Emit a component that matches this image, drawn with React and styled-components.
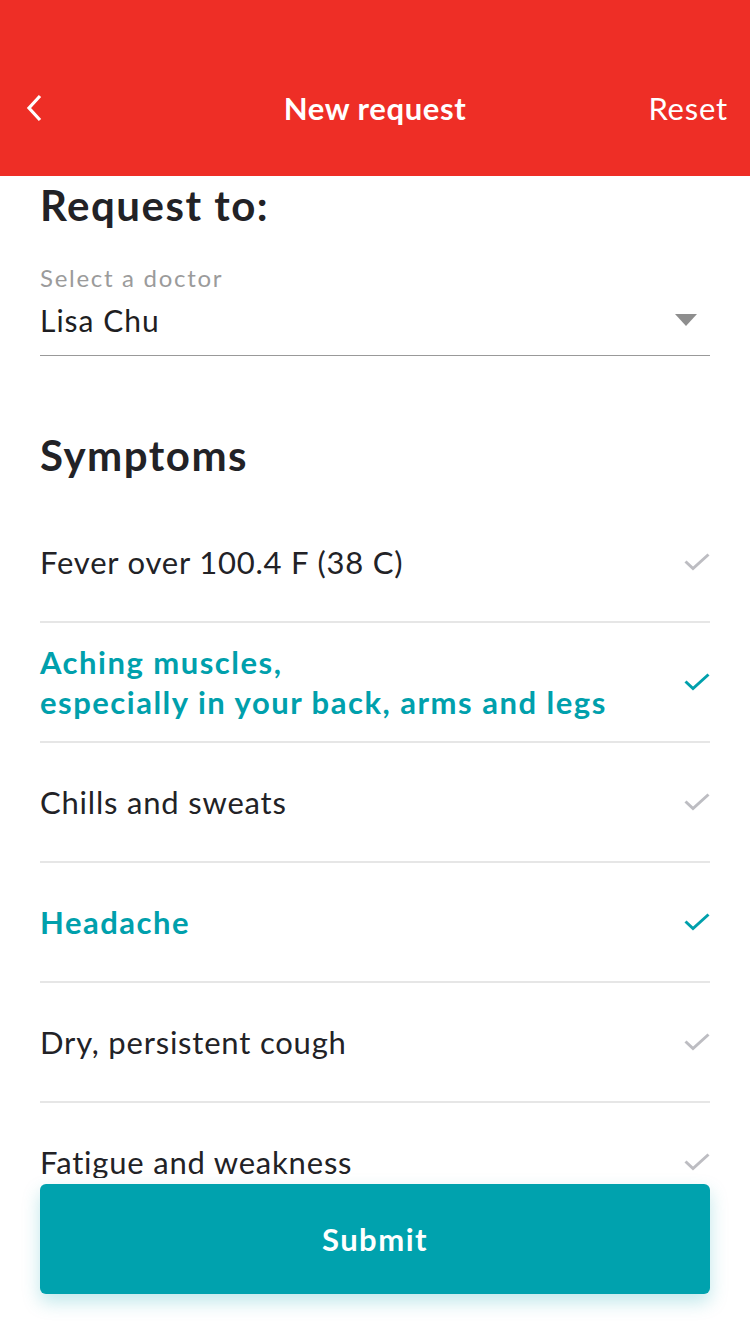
import styled, { createGlobalStyle } from 'styled-components';

const symptoms = [
  { label: 'Fever over 100.4 F (38 C)', checked: false },
  { label: 'Aching muscles,\nespecially in your back, arms and legs', checked: true },
  { label: 'Chills and sweats', checked: false },
  { label: 'Headache', checked: true },
  { label: 'Dry, persistent cough', checked: false },
  { label: 'Fatigue and weakness', checked: false },
];

const Check = ({ checked }) => (
  <CheckIcon viewBox="0 0 26 18" $checked={checked}>
    <path d="M1.5 8.5 L9 15.5 L24.5 1.5" />
  </CheckIcon>
);

const App = () => (
  <>
    <GlobalStyle />
    <Page>
      <Header>
        <BackButton aria-label="Back">
          <svg width="18" height="28" viewBox="0 0 18 28">
            <path d="M15 2 L4 14 L15 26" fill="none" stroke="#fff" strokeWidth="3.2" />
          </svg>
        </BackButton>
        <Title>New request</Title>
        <ResetButton>Reset</ResetButton>
      </Header>
      <Content>
        <SectionTitle>Request to:</SectionTitle>
        <Select>
          <SelectLabel>Select a doctor</SelectLabel>
          <SelectRow>
            <SelectValue>Lisa Chu</SelectValue>
            <Caret />
          </SelectRow>
        </Select>
        <SectionTitle $top={74}>Symptoms</SectionTitle>
        <List>
          {symptoms.map((s) => (
            <Row key={s.label}>
              <RowText $checked={s.checked}>{s.label}</RowText>
              <Check checked={s.checked} />
            </Row>
          ))}
        </List>
      </Content>
      <Footer>
        <SubmitButton>Submit</SubmitButton>
      </Footer>
    </Page>
  </>
);

const GlobalStyle = createGlobalStyle`
  body {
    margin: 0;
    font-family: Lato, "Noto Sans", sans-serif;
    background: #fff;
  }
`;

const Page = styled.div`
  width: 750px;
  height: 1334px;
  display: flex;
  flex-direction: column;
  overflow: hidden;
`;

const Header = styled.header`
  height: 176px;
  flex-shrink: 0;
  background: #ee2e26;
  display: grid;
  grid-template-columns: 1fr auto 1fr;
  align-items: center;
  padding: 40px 22px 0 22px;
  box-sizing: border-box;
  color: #fff;
`;

const BackButton = styled.button`
  justify-self: start;
  background: none;
  border: 0;
  padding: 0 0 0 3px;
  display: flex;
`;

const Title = styled.h1`
  margin: 0;
  font-size: 31px;
  font-weight: 700;
  letter-spacing: 0.6px;
`;

const ResetButton = styled.button`
  justify-self: end;
  background: none;
  border: 0;
  padding: 0;
  color: #fff;
  font-family: inherit;
  font-size: 31px;
  font-weight: 400;
  letter-spacing: 0.8px;
`;

const Content = styled.main`
  height: 1002px;
  overflow: hidden;
  padding: 0 40px;
  flex-shrink: 0;
`;

const SectionTitle = styled.h2`
  margin: ${(p) => p.$top || 4}px 0 0;
  font-size: 42px;
  font-weight: 700;
  letter-spacing: 1.5px;
  line-height: 50px;
  color: #222226;
`;

const Select = styled.div`
  margin-top: 33px;
  border-bottom: 1px solid #999;
  padding-bottom: 17px;
`;

const SelectLabel = styled.div`
  font-size: 24px;
  letter-spacing: 1.7px;
  color: #9b9b9b;
  line-height: 30px;
`;

const SelectRow = styled.div`
  display: flex;
  justify-content: space-between;
  align-items: center;
  margin-top: 9px;
`;

const SelectValue = styled.div`
  font-size: 30px;
  letter-spacing: 1px;
  color: #1e1e22;
  line-height: 36px;
`;

const Caret = styled.span`
  width: 0;
  height: 0;
  border-left: 11px solid transparent;
  border-right: 11px solid transparent;
  border-top: 12px solid #8e8e8e;
  margin-right: 13px;
`;

const List = styled.ul`
  list-style: none;
  margin: 23px 0 0;
  padding: 0;
`;

const Row = styled.li`
  height: 120px;
  display: flex;
  align-items: center;
  justify-content: space-between;
  border-bottom: 2px solid #e6e6e6;
  box-sizing: border-box;
`;

const RowText = styled.span`
  white-space: pre-line;
  font-size: 31px;
  line-height: 40px;
  color: ${(p) => (p.$checked ? '#00a0ac' : '#222226')};
  font-weight: ${(p) => (p.$checked ? 700 : 400)};
  letter-spacing: ${(p) => (p.$checked ? 1.5 : 0.8)}px;
`;

const CheckIcon = styled.svg`
  width: 26px;
  height: 18px;
  fill: none;
  stroke: ${(p) => (p.$checked ? '#00a0ac' : '#bdbdc2')};
  stroke-width: 3;
  flex-shrink: 0;
  margin-top: -1px;
`;

const Footer = styled.footer`
  padding: 6px 40px 0;
`;

const SubmitButton = styled.button`
  width: 100%;
  height: 110px;
  border: 0;
  border-radius: 6px;
  background: #00a2ae;
  color: #fff;
  font-family: inherit;
  font-size: 31px;
  font-weight: 700;
  letter-spacing: 1.5px;
  box-shadow: 0 8px 18px rgba(0, 162, 174, 0.25);
`;

export default App;
